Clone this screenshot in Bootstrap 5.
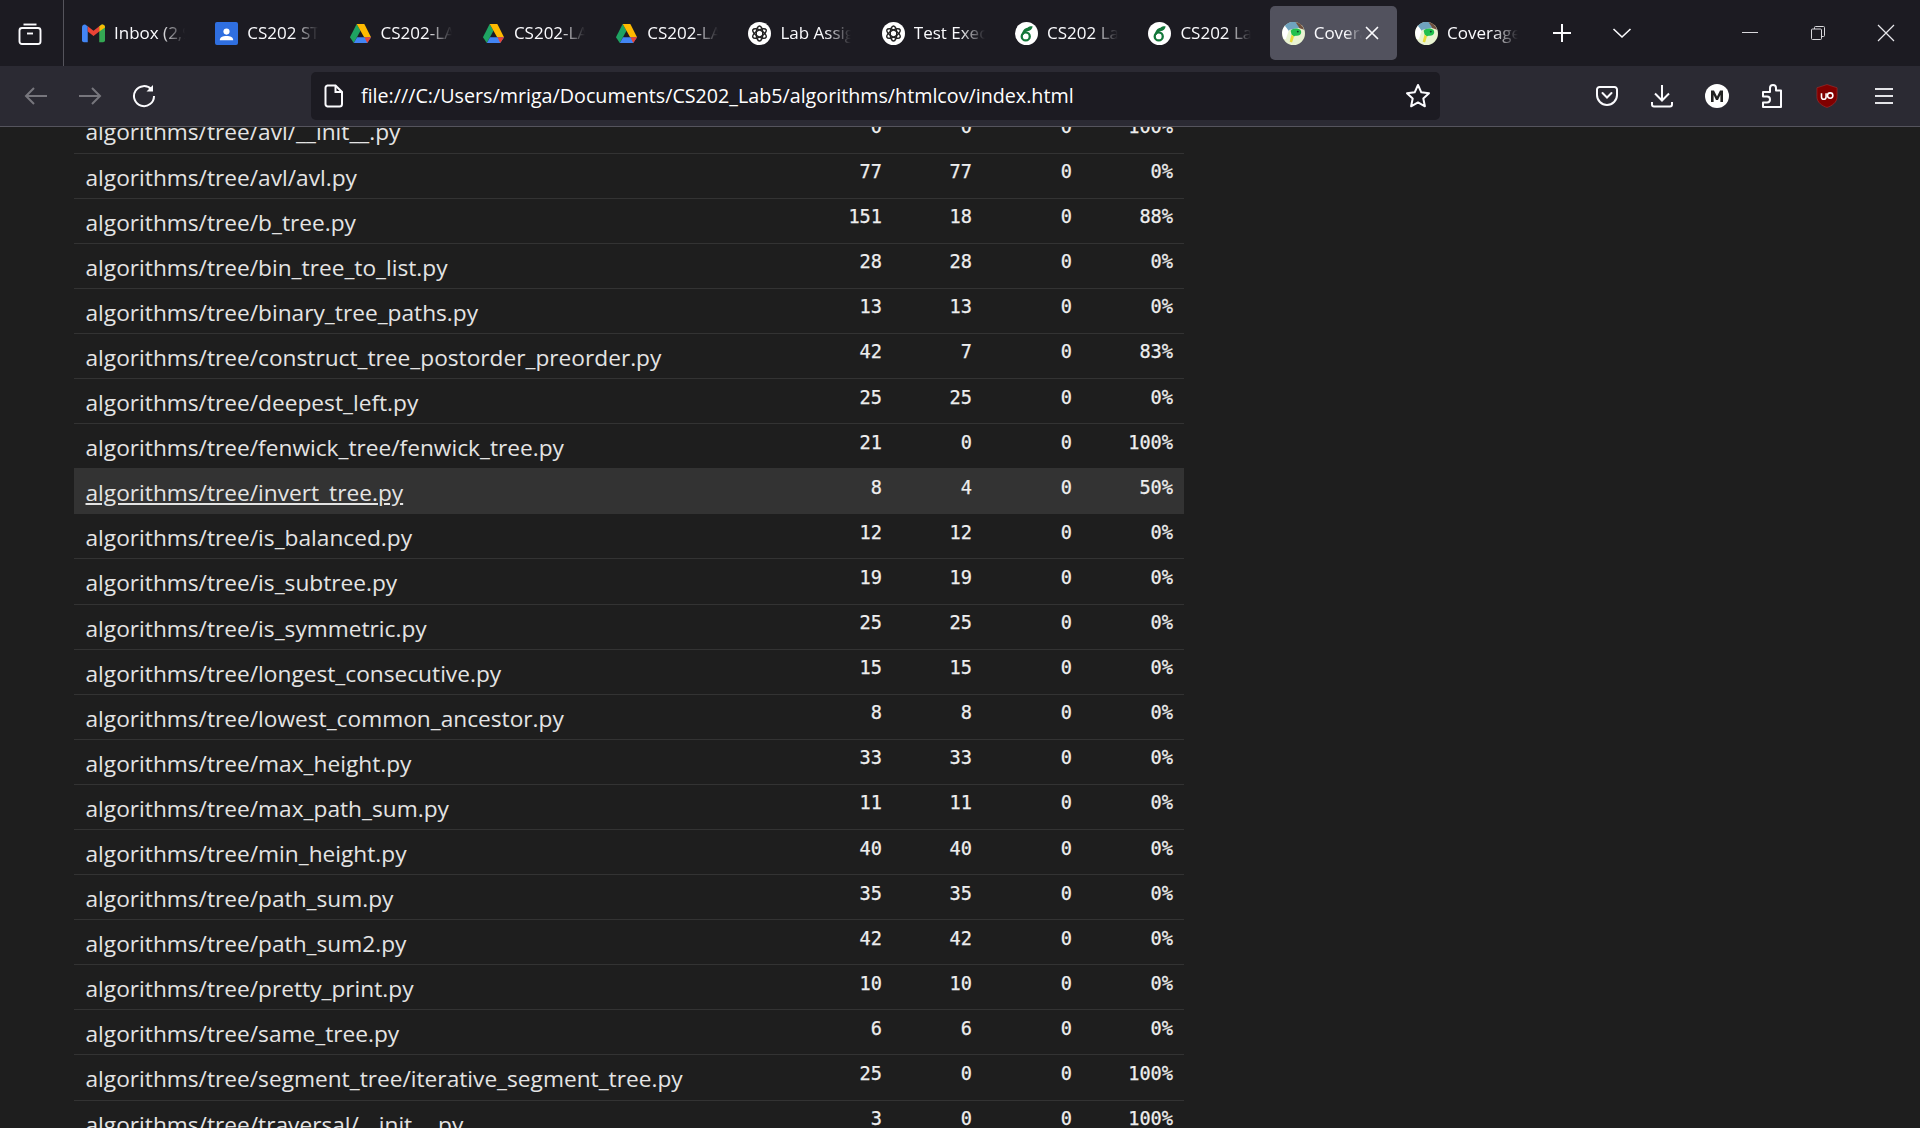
<!DOCTYPE html>
<html lang="en">
<head>
  <meta charset="UTF-8">
  <title>Coverage report</title>
  <link href="https://cdn.jsdelivr.net/npm/bootstrap@5.3.0/dist/css/bootstrap.min.css" rel="stylesheet">
  <style>
    html, body { height: 100%; overflow: hidden; }
    body { background-color: #1e1e1e; font-family: "Open Sans", "Noto Sans", sans-serif; }
    .tab-strip { height: 66px; background-color: #1c1b22; color: #fbfbfe; }
    .strip-view { width: 64px; height: 66px; padding-right: 3px; border-right: 1px solid #55545c; }
    .tab-list { gap: 6.3px; padding-left: 6px; }
    .tab-item { width: 127px; height: 54px; padding-left: 12px; border-radius: 5px; font-size: 17px; }
    .tab-item.is-active { background-color: #52525e; }
    .tab-icon { width: 23px; height: 23px; flex: none; }
    .tab-label { width: 74px; margin-left: 9px; white-space: nowrap; overflow: hidden; -webkit-mask-image: linear-gradient(to right, #000 62%, transparent 96%); mask-image: linear-gradient(to right, #000 62%, transparent 96%); }
    .is-active .tab-label { width: 50px; }
    .strip-btn { width: 60px; }
    .strip-plus { margin-left: 2px; }
    .strip-end { margin-left: auto; }
    .win-btn { width: 68px; height: 66px; }
    .nav-bar { height: 61px; padding-bottom: 1px; background-color: #2b2a33; border-bottom: 1px solid #55545d; color: #fbfbfe; }
    .nav-btn { width: 54px; }
    .nav-left { width: 311px; padding-left: 9px; }
    .url-box { width: 1129px; height: 48px; background-color: #1c1b22; border-radius: 5px; padding: 0 9px 0 13px; font-size: 19.7px; }
    .url-text { margin-left: 17px; padding-top: 1px; }
    .nav-right { margin-left: auto; padding-right: 8px; }
    .tool-btn { width: 55.1px; }
    .tool-menu { margin-left: 2.4px; }
    .page-view { height: 1001px; overflow: hidden; padding-left: 74px; }
    .cov-table { width: 1110px; margin-top: -19px; margin-bottom: 0; table-layout: fixed; --bs-table-bg: transparent; --bs-table-color: #e4e4e4; --bs-table-border-color: #333; }
    .col-file { width: 739px; }
    .col-stmts { width: 80px; }
    .col-miss { width: 90px; }
    .col-excl { width: 100px; }
    .col-cover { width: 101px; }
    .cov-table td { height: 45.1px; padding: 0; vertical-align: top; border-bottom: 1px solid #333; }
    .cov-table .file-cell { padding: 3px 0 0 11.5px; font-size: 22.7px; line-height: 41px; }
    .file-cell a { color: inherit; text-decoration: none; }
    .cov-table .num-cell { padding: 3.5px 11px 0 0; text-align: right; font-family: "DejaVu Sans Mono", monospace; font-size: 18.6px; line-height: 30px; color: #eee; -webkit-text-stroke: .25px #eee; }
    .cov-table tr.row-hover td { background-color: #333; }
    .row-hover a { text-decoration: underline; }
  </style>
</head>
<body>
  <svg width="0" height="0" class="d-none">
    <symbol id="ico-gpt" viewBox="0 0 24 24">
      <circle cx="12" cy="12" r="12" fill="#fff"/>
      <g fill="none" stroke="#222" stroke-width="1.5">
        <ellipse cx="12" cy="12" rx="3.4" ry="7.9"/>
        <ellipse cx="12" cy="12" rx="3.4" ry="7.9" transform="rotate(60 12 12)"/>
        <ellipse cx="12" cy="12" rx="3.4" ry="7.9" transform="rotate(120 12 12)"/>
      </g>
    </symbol>
    <symbol id="ico-drive" viewBox="0 0 24 22">
      <polygon points="8,1 1,15 5,21 12,8" fill="#1ea362"/>
      <polygon points="8,1 16,1 23,15 15.8,15" fill="#ffba00"/>
      <polygon points="8.4,15 23,15 19,21 5,21" fill="#4285f4"/>
      <polygon points="16.2,15 23,15 19,21" fill="#ea4335"/>
    </symbol>
    <symbol id="ico-leaf" viewBox="0 0 24 24">
      <circle cx="12" cy="12" r="12" fill="#fff"/>
      <circle cx="11.2" cy="15" r="4.2" fill="none" stroke="#13773a" stroke-width="2.4"/>
      <path d="M7.2 14C7.4 9 10 6.5 13 6C14.5 4.8 16.5 4.4 18.4 4.6C18 7.4 16 9.4 12.8 9.6C11 10.2 9.6 11.6 9 13.4Z" fill="#13773a"/>
    </symbol>
    <symbol id="ico-cov" viewBox="0 0 24 24">
      <circle cx="12" cy="12" r="12" fill="#e9f3d2"/>
      <path d="M13 0A12 12 0 0 1 23 8L17 6Z" fill="#70503f"/>
      <path d="M3 4A12 12 0 0 1 14 0L18 6L8 8L3 13Z" fill="#6fa3bf"/>
      <path d="M.2 11A12 12 0 0 1 3 4L7 9L4 18L1.500 17.500Z" fill="#fff"/>
      <path d="M9 9C11 6.500 16 6 19 8C21 10 20 13.500 17 14C15 14.300 13.500 14 12.500 15L10 13Z" fill="#22c04e"/>
      <path d="M10 13L12.500 15L10.500 21.500L8 20.500Z" fill="#e8dc3a"/>
      <circle cx="16.500" cy="10" r="1" fill="#0d3b2a"/>
    </symbol>
    <symbol id="ico-x" viewBox="0 0 16 16">
      <path d="M2.500 2.500L13.500 13.500M13.500 2.500L2.500 13.500" stroke="#fbfbfe" stroke-width="1.7" stroke-linecap="round"/>
    </symbol>
  </svg>

  <div class="tab-strip d-flex align-items-center">
    <div class="strip-view d-flex align-items-center justify-content-center flex-none">
      <svg width="24" height="24" viewBox="0 0 24 24" fill="none" stroke="#fbfbfe" stroke-width="1.9"><path d="M5.500 3.500H18.500"/><rect x="1.500" y="7" width="21" height="16" rx="2.500"/><path d="M9 12.500H15"/></svg>
    </div>
    <div class="tab-list d-flex align-items-center">
      <div class="tab-item d-flex align-items-center">
        <svg class="tab-icon" viewBox="0 0 24 20"><path d="M0 3.500C0 1 2.500 0 4 1L6 2.500V19H2A2 2 0 0 1 0 17Z" fill="#4285f4"/><path d="M24 3.500C24 1 21.500 0 20 1L18 2.500V19H22A2 2 0 0 0 24 17Z" fill="#34a853"/><path d="M24 3.500C24 1 21.500 0 20 1L18 2.500V8L24 3.800Z" fill="#fbbc04"/><path d="M6 2.500L12 7L18 2.500V8L12 12.500L6 8Z" fill="#ea4335"/></svg>
        <span class="tab-label">Inbox (2,981)</span>
      </div>
      <div class="tab-item d-flex align-items-center">
        <svg class="tab-icon" viewBox="0 0 24 24"><rect width="24" height="24" rx="2" fill="#2f6fe0"/><circle cx="12" cy="10" r="3.200" fill="#fff"/><path d="M5 19C5 15.500 8 14.500 12 14.500S19 15.500 19 19Z" fill="#fff"/></svg>
        <span class="tab-label">CS202 STUDENTS</span>
      </div>
      <div class="tab-item d-flex align-items-center"><svg class="tab-icon"><use href="#ico-drive"/></svg><span class="tab-label">CS202-LAB</span></div>
      <div class="tab-item d-flex align-items-center"><svg class="tab-icon"><use href="#ico-drive"/></svg><span class="tab-label">CS202-LAB</span></div>
      <div class="tab-item d-flex align-items-center"><svg class="tab-icon"><use href="#ico-drive"/></svg><span class="tab-label">CS202-LAB</span></div>
      <div class="tab-item d-flex align-items-center"><svg class="tab-icon"><use href="#ico-gpt"/></svg><span class="tab-label">Lab Assignment</span></div>
      <div class="tab-item d-flex align-items-center"><svg class="tab-icon"><use href="#ico-gpt"/></svg><span class="tab-label">Test Execution</span></div>
      <div class="tab-item d-flex align-items-center"><svg class="tab-icon"><use href="#ico-leaf"/></svg><span class="tab-label">CS202 Lab</span></div>
      <div class="tab-item d-flex align-items-center"><svg class="tab-icon"><use href="#ico-leaf"/></svg><span class="tab-label">CS202 Lab</span></div>
      <div class="tab-item is-active d-flex align-items-center"><svg class="tab-icon"><use href="#ico-cov"/></svg><span class="tab-label">Coverage</span><svg width="16" height="16"><use href="#ico-x"/></svg></div>
      <div class="tab-item d-flex align-items-center"><svg class="tab-icon"><use href="#ico-cov"/></svg><span class="tab-label">Coverage</span></div>
    </div>
    <div class="strip-btn strip-plus d-flex justify-content-center">
      <svg width="22" height="22" viewBox="0 0 22 22" stroke="#fbfbfe" stroke-width="2"><path d="M11 2V20M2 11H20"/></svg>
    </div>
    <div class="strip-btn d-flex justify-content-center">
      <svg width="20" height="12" viewBox="0 0 20 12" fill="none" stroke="#fbfbfe" stroke-width="1.600"><path d="M1.500 2L10 10L18.500 2"/></svg>
    </div>
    <div class="strip-end d-flex">
      <div class="win-btn d-flex align-items-center justify-content-center"><svg width="16" height="16" viewBox="0 0 16 16" stroke="#d8d8dc" stroke-width="1"><path d="M0 7.500H16"/></svg></div>
      <div class="win-btn d-flex align-items-center justify-content-center"><svg width="16" height="16" viewBox="0 0 16 16" fill="none" stroke="#d8d8dc" stroke-width="1"><rect x="1.500" y="4" width="10" height="10.500" rx="1"/><path d="M4.500 4V2.500A1 1 0 0 1 5.500 1.500H13.500A1 1 0 0 1 14.500 2.500V10.500A1 1 0 0 1 13.500 11.500H11.500"/></svg></div>
      <div class="win-btn d-flex align-items-center justify-content-center"><svg width="18" height="18" viewBox="0 0 18 18" stroke="#e8e8ec" stroke-width="1.200"><path d="M1 1L17 17M17 1L1 17"/></svg></div>
    </div>
  </div>

  <div class="nav-bar d-flex align-items-center">
    <div class="nav-left d-flex align-items-center">
      <div class="nav-btn d-flex justify-content-center"><svg width="24" height="20" viewBox="0 0 24 20" fill="none" stroke="#77767d" stroke-width="2"><path d="M23 10H2M10 2L2 10L10 18"/></svg></div>
      <div class="nav-btn d-flex justify-content-center"><svg width="24" height="20" viewBox="0 0 24 20" fill="none" stroke="#77767d" stroke-width="2"><path d="M1 10H22M14 2L22 10L14 18"/></svg></div>
      <div class="nav-btn d-flex justify-content-center"><svg width="24" height="24" viewBox="0 0 24 24" fill="none" stroke="#fbfbfe" stroke-width="2"><path d="M19.500 5.500A10 10 0 1 0 22 12"/><path d="M21 1V7.500H14.500" fill="#fbfbfe" stroke="none"/></svg></div>
    </div>
    <div class="url-box d-flex align-items-center text-white">
      <svg class="flex-none" width="20" height="24" viewBox="0 0 20 24" fill="none" stroke="#fbfbfe" stroke-width="2"><path d="M3.500 1.500H11.500L18 8V20A2.500 2.500 0 0 1 15.500 22.500H3.500A2.500 2.500 0 0 1 1.500 20V4A2.500 2.500 0 0 1 3.500 1.500Z"/><path d="M11.500 1.500V8H18"/></svg>
      <span class="url-text">file:///C:/Users/mriga/Documents/CS202_Lab5/algorithms/htmlcov/index.html</span>
      <svg class="ms-auto" width="26" height="26" viewBox="0 0 26 26" fill="none" stroke="#fbfbfe" stroke-width="2" stroke-linejoin="round"><path d="M13 2L16.300 9.300L24 10.200L18.300 15.500L19.900 23.300L13 19.400L6.100 23.300L7.700 15.500L2 10.200L9.700 9.300Z"/></svg>
    </div>
    <div class="nav-right d-flex align-items-center">
      <div class="tool-btn d-flex justify-content-center"><svg width="22" height="22" viewBox="0 0 22 22" fill="none" stroke="#fbfbfe" stroke-width="2"><path d="M3.500 2H18.500A2.500 2.500 0 0 1 21 4.500V10A10 10 0 0 1 1 10V4.500A2.500 2.500 0 0 1 3.500 2Z"/><path d="M6.500 8L11 12.500L15.500 8" stroke-linecap="round"/></svg></div>
      <div class="tool-btn d-flex justify-content-center"><svg width="22" height="24" viewBox="0 0 22 24" fill="none" stroke="#fbfbfe" stroke-width="2"><path d="M11 1V16M4 9.500L11 16.500L18 9.500"/><path d="M1 18V20.500A2 2 0 0 0 3 22.500H19A2 2 0 0 0 21 20.500V18"/></svg></div>
      <div class="tool-btn d-flex justify-content-center"><svg width="24" height="24" viewBox="0 0 24 24"><circle cx="12" cy="12" r="12" fill="#fff"/><path d="M6 18V6.500H9L12 12.500L15 6.500H18V18H15.400V11L13 16H11L8.600 11V18Z" fill="#222"/></svg></div>
      <div class="tool-btn d-flex justify-content-center"><svg width="20" height="24" viewBox="0 0 20 24" fill="none" stroke="#fbfbfe" stroke-width="2" stroke-linejoin="round"><path d="M1 8H8V4A3 3 0 0 1 14 4V6.500H19V23H1V18.500H5A3 3 0 0 0 5 12.500H1Z"/></svg></div>
      <div class="tool-btn d-flex justify-content-center"><svg width="22" height="24" viewBox="0 0 24 26"><path d="M12 .500L23 4V14C23 20 17 24 12 25.500C7 24 1 20 1 14V4Z" fill="#800000" stroke="#a33" stroke-width=".6"/><path d="M6 10V14A2.500 2.500 0 0 0 11 14V10" fill="none" stroke="#fff" stroke-width="1.700"/><circle cx="15.500" cy="12.500" r="2.900" fill="none" stroke="#fff" stroke-width="1.700"/></svg></div>
      <div class="tool-btn tool-menu d-flex justify-content-center"><svg width="20" height="18" viewBox="0 0 20 18" stroke="#e4e4e8" stroke-width="2"><path d="M1 2H19M1 9H19M1 16H19"/></svg></div>
    </div>
  </div>

  <div class="page-view">
    <table class="cov-table table">
      <colgroup><col class="col-file"><col class="col-stmts"><col class="col-miss"><col class="col-excl"><col class="col-cover"></colgroup>
      <tbody>
        <tr><td class="file-cell"><a href="#">algorithms/tree/avl/__init__.py</a></td><td class="num-cell">0</td><td class="num-cell">0</td><td class="num-cell">0</td><td class="num-cell">100%</td></tr>
        <tr><td class="file-cell"><a href="#">algorithms/tree/avl/avl.py</a></td><td class="num-cell">77</td><td class="num-cell">77</td><td class="num-cell">0</td><td class="num-cell">0%</td></tr>
        <tr><td class="file-cell"><a href="#">algorithms/tree/b_tree.py</a></td><td class="num-cell">151</td><td class="num-cell">18</td><td class="num-cell">0</td><td class="num-cell">88%</td></tr>
        <tr><td class="file-cell"><a href="#">algorithms/tree/bin_tree_to_list.py</a></td><td class="num-cell">28</td><td class="num-cell">28</td><td class="num-cell">0</td><td class="num-cell">0%</td></tr>
        <tr><td class="file-cell"><a href="#">algorithms/tree/binary_tree_paths.py</a></td><td class="num-cell">13</td><td class="num-cell">13</td><td class="num-cell">0</td><td class="num-cell">0%</td></tr>
        <tr><td class="file-cell"><a href="#">algorithms/tree/construct_tree_postorder_preorder.py</a></td><td class="num-cell">42</td><td class="num-cell">7</td><td class="num-cell">0</td><td class="num-cell">83%</td></tr>
        <tr><td class="file-cell"><a href="#">algorithms/tree/deepest_left.py</a></td><td class="num-cell">25</td><td class="num-cell">25</td><td class="num-cell">0</td><td class="num-cell">0%</td></tr>
        <tr><td class="file-cell"><a href="#">algorithms/tree/fenwick_tree/fenwick_tree.py</a></td><td class="num-cell">21</td><td class="num-cell">0</td><td class="num-cell">0</td><td class="num-cell">100%</td></tr>
        <tr class="row-hover"><td class="file-cell"><a href="#">algorithms/tree/invert_tree.py</a></td><td class="num-cell">8</td><td class="num-cell">4</td><td class="num-cell">0</td><td class="num-cell">50%</td></tr>
        <tr><td class="file-cell"><a href="#">algorithms/tree/is_balanced.py</a></td><td class="num-cell">12</td><td class="num-cell">12</td><td class="num-cell">0</td><td class="num-cell">0%</td></tr>
        <tr><td class="file-cell"><a href="#">algorithms/tree/is_subtree.py</a></td><td class="num-cell">19</td><td class="num-cell">19</td><td class="num-cell">0</td><td class="num-cell">0%</td></tr>
        <tr><td class="file-cell"><a href="#">algorithms/tree/is_symmetric.py</a></td><td class="num-cell">25</td><td class="num-cell">25</td><td class="num-cell">0</td><td class="num-cell">0%</td></tr>
        <tr><td class="file-cell"><a href="#">algorithms/tree/longest_consecutive.py</a></td><td class="num-cell">15</td><td class="num-cell">15</td><td class="num-cell">0</td><td class="num-cell">0%</td></tr>
        <tr><td class="file-cell"><a href="#">algorithms/tree/lowest_common_ancestor.py</a></td><td class="num-cell">8</td><td class="num-cell">8</td><td class="num-cell">0</td><td class="num-cell">0%</td></tr>
        <tr><td class="file-cell"><a href="#">algorithms/tree/max_height.py</a></td><td class="num-cell">33</td><td class="num-cell">33</td><td class="num-cell">0</td><td class="num-cell">0%</td></tr>
        <tr><td class="file-cell"><a href="#">algorithms/tree/max_path_sum.py</a></td><td class="num-cell">11</td><td class="num-cell">11</td><td class="num-cell">0</td><td class="num-cell">0%</td></tr>
        <tr><td class="file-cell"><a href="#">algorithms/tree/min_height.py</a></td><td class="num-cell">40</td><td class="num-cell">40</td><td class="num-cell">0</td><td class="num-cell">0%</td></tr>
        <tr><td class="file-cell"><a href="#">algorithms/tree/path_sum.py</a></td><td class="num-cell">35</td><td class="num-cell">35</td><td class="num-cell">0</td><td class="num-cell">0%</td></tr>
        <tr><td class="file-cell"><a href="#">algorithms/tree/path_sum2.py</a></td><td class="num-cell">42</td><td class="num-cell">42</td><td class="num-cell">0</td><td class="num-cell">0%</td></tr>
        <tr><td class="file-cell"><a href="#">algorithms/tree/pretty_print.py</a></td><td class="num-cell">10</td><td class="num-cell">10</td><td class="num-cell">0</td><td class="num-cell">0%</td></tr>
        <tr><td class="file-cell"><a href="#">algorithms/tree/same_tree.py</a></td><td class="num-cell">6</td><td class="num-cell">6</td><td class="num-cell">0</td><td class="num-cell">0%</td></tr>
        <tr><td class="file-cell"><a href="#">algorithms/tree/segment_tree/iterative_segment_tree.py</a></td><td class="num-cell">25</td><td class="num-cell">0</td><td class="num-cell">0</td><td class="num-cell">100%</td></tr>
        <tr><td class="file-cell"><a href="#">algorithms/tree/traversal/__init__.py</a></td><td class="num-cell">3</td><td class="num-cell">0</td><td class="num-cell">0</td><td class="num-cell">100%</td></tr>
      </tbody>
    </table>
  </div>
  <script src="https://cdn.jsdelivr.net/npm/bootstrap@5.3.0/dist/js/bootstrap.bundle.min.js"></script>
</body>
</html>
